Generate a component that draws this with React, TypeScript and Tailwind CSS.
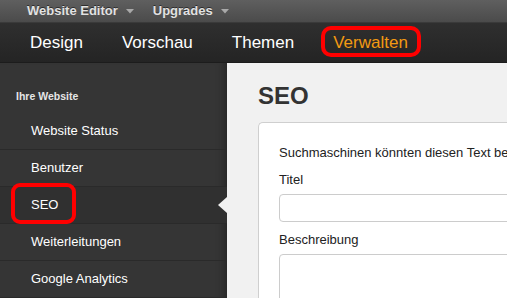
import React from "react";

const font = { fontFamily: '"Liberation Sans", Arial, sans-serif' };

function Caret() {
  return (
    <svg width="8" height="5" viewBox="0 0 8 5" className="mt-[1px]">
      <path d="M0 0 L8 0 L4 4.5 Z" fill="#a9a9a9" />
    </svg>
  );
}

const items = ["Website Status", "Benutzer", "SEO", "Weiterleitungen", "Google Analytics"];

export default function App() {
  return (
    <div className="w-[507px] h-[298px] overflow-hidden flex flex-col bg-[#f1f1f1]" style={font}>
      {/* top bar */}
      <div className="h-[23px] shrink-0 flex items-center pl-[27px] bg-gradient-to-b from-[#5f5f5f] to-[#4b4b4b] border-b border-[#3a3a3a] text-[13px] font-bold text-[#e2e2e2] [text-shadow:0_-1px_0_rgba(0,0,0,0.5)]">
        <span>Website Editor</span>
        <span className="ml-[8px] flex items-center"><Caret /></span>
        <span className="ml-[19px]">Upgrades</span>
        <span className="ml-[8px] flex items-center"><Caret /></span>
      </div>
      {/* main nav */}
      <div className="h-[40px] shrink-0 flex items-center pl-[30px] gap-[39px] bg-gradient-to-b from-[#2f2f2f] to-[#242424] text-[17px] leading-[20px] text-white border-b border-[#1c1c1c]">
        <span>Design</span>
        <span>Vorschau</span>
        <span>Themen</span>
        <span className="relative text-[#f39a12]">
          Verwalten
          <span className="absolute left-[-12px] right-[-13px] top-[-7px] bottom-[-4px] border-[4px] border-[#ff0000] rounded-[10px]" />
        </span>
      </div>
      {/* body */}
      <div className="flex flex-1 min-h-0">
        <div className="w-[227px] shrink-0 bg-[#353535] relative shadow-[inset_-10px_0_10px_-8px_rgba(0,0,0,0.35)]">
          <div className="pl-[16px] pt-[26px] h-[50px] text-[10.5px] font-bold text-[#e6e6e6]">Ihre Website</div>
          {items.map((it) => (
            <div
              key={it}
              className={
                "relative h-[37px] flex items-center pl-[31px] text-[13px] leading-[20px] text-white border-b border-[#2a2a2a] " +
                (it === "SEO" ? "bg-[#303030]" : "")
              }
            >
              <span className="relative">
                {it}
                {it === "SEO" && (
                  <span className="absolute left-[-20px] right-[-18px] top-[-12px] bottom-[-9px] border-[4px] border-[#ff0000] rounded-[9px]" />
                )}
              </span>
              {it === "SEO" && (
                <span className="absolute right-0 top-[10px] w-0 h-0 border-y-[8px] border-y-transparent border-r-[9px] border-r-[#f1f1f1]" />
              )}
            </div>
          ))}
        </div>
        <div className="flex-1 min-w-0 pl-[31px] pt-[18px]">
          <div className="text-[24px] font-bold text-[#333] leading-[30px]">SEO</div>
          <div className="mt-[11px] bg-white border border-[#cfcfcf] rounded-l-[5px] border-r-0 pl-[20px] pt-[20px] h-[200px] w-[300px] text-[13px] leading-[20px] text-[#222]">
            <div className="whitespace-nowrap">Suchmaschinen könnten diesen Text bei Ergebnissen anzeigen</div>
            <div className="mt-[7px]">Titel</div>
            <div className="mt-[4px] h-[28px] border border-[#cccccc] rounded-[4px] w-[300px]" />
            <div className="mt-[8px]">Beschreibung</div>
            <div className="mt-[4px] h-[60px] border border-[#cccccc] rounded-[4px] w-[300px]" />
          </div>
        </div>
      </div>
    </div>
  );
}
